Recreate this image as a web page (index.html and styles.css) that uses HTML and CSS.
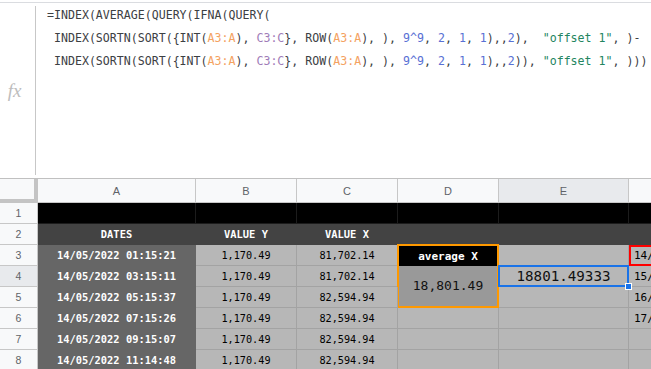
FILE: index.html
```html
<html>

<head>
    <link rel="stylesheet" href="styles.css">
</head>

<body>

    <div class="formula-bar">
        <div class="fx">fx</div>
        <pre class="formula">=INDEX(AVERAGE(QUERY(IFNA(QUERY(
 INDEX(SORTN(SORT({INT(<span class="r1">A3:A</span>), <span class="r2">C3:C</span>}, ROW(<span class="r1">A3:A</span>), ), <span class="num">9^9</span>, <span class="num">2</span>, <span class="num">1</span>, <span class="num">1</span>),,<span class="num">2</span>),  <span class="str">"offset 1"</span>, )-
 INDEX(SORTN(SORT({INT(<span class="r1">A3:A</span>), <span class="r2">C3:C</span>}, ROW(<span class="r1">A3:A</span>), ), <span class="num">9^9</span>, <span class="num">2</span>, <span class="num">1</span>, <span class="num">1</span>),,<span class="num">2</span>)), <span class="str">"offset 1"</span>, )))</pre>
    </div>

    <div class="sheet">
        <!-- column headers -->
        <div class="cell corner"></div>
        <div class="cell col-head">A</div>
        <div class="cell col-head">B</div>
        <div class="cell col-head">C</div>
        <div class="cell col-head">D</div>
        <div class="cell col-head selected">E</div>
        <div class="cell col-head">F</div>

        <!-- row 1 -->
        <div class="cell row-head">1</div>
        <div class="cell black"></div>
        <div class="cell black"></div>
        <div class="cell black"></div>
        <div class="cell black"></div>
        <div class="cell black"></div>
        <div class="cell black"></div>

        <!-- row 2 -->
        <div class="cell row-head">2</div>
        <div class="cell title">DATES</div>
        <div class="cell title">VALUE Y</div>
        <div class="cell title">VALUE X</div>
        <div class="cell title"></div>
        <div class="cell title"></div>
        <div class="cell title"></div>

        <!-- row 3 -->
        <div class="cell row-head">3</div>
        <div class="cell date">14/05/2022 01:15:21</div>
        <div class="cell val">1,170.49</div>
        <div class="cell val">81,702.14</div>
        <div class="cell avg-label">average X</div>
        <div class="cell val"></div>
        <div class="cell side red-box">14/05/2022</div>

        <!-- row 4 -->
        <div class="cell row-head selected">4</div>
        <div class="cell date">14/05/2022 03:15:11</div>
        <div class="cell val">1,170.49</div>
        <div class="cell val">81,702.14</div>
        <div class="cell avg-value">18,801.49</div>
        <div class="cell val result">18801.49333<span class="handle"></span></div>
        <div class="cell side">15/05/2022</div>

        <!-- row 5 -->
        <div class="cell row-head">5</div>
        <div class="cell date">14/05/2022 05:15:37</div>
        <div class="cell val">1,170.49</div>
        <div class="cell val">82,594.94</div>
        <div class="cell val"></div>
        <div class="cell side">16/05/2022</div>

        <!-- row 6 -->
        <div class="cell row-head">6</div>
        <div class="cell date">14/05/2022 07:15:26</div>
        <div class="cell val">1,170.49</div>
        <div class="cell val">82,594.94</div>
        <div class="cell val"></div>
        <div class="cell val"></div>
        <div class="cell side">17/05/2022</div>

        <!-- row 7 -->
        <div class="cell row-head">7</div>
        <div class="cell date">14/05/2022 09:15:07</div>
        <div class="cell val">1,170.49</div>
        <div class="cell val">82,594.94</div>
        <div class="cell val"></div>
        <div class="cell val"></div>
        <div class="cell side"></div>

        <!-- row 8 -->
        <div class="cell row-head">8</div>
        <div class="cell date">14/05/2022 11:14:48</div>
        <div class="cell val">1,170.49</div>
        <div class="cell val">82,594.94</div>
        <div class="cell val"></div>
        <div class="cell val"></div>
        <div class="cell side"></div>
    </div>

</body>

</html>
```

FILE: styles.css
```css
body {
    margin: 0;
    background-color: #fff;
    font-family: "Liberation Sans", Arial, sans-serif;
    width: 651px;
    height: 369px;
    overflow: hidden;
}

/* formula bar */

.formula-bar {
    display: flex;
    height: 175px;
    margin-top: 2px;
    border-top: 1px solid #dadce0;
    border-bottom: 1px solid #c0c0c0;
    overflow: hidden;
}

.fx {
    flex: 0 0 36px;
    margin: 3px 0 3px 0;
    border-right: 1px solid #c7c7c7;
    display: flex;
    align-items: center;
    justify-content: center;
    padding-right: 6px;
    box-sizing: border-box;
    font-family: "Liberation Serif", serif;
    font-style: italic;
    font-size: 19px;
    color: #bdbdbd;
}

.formula {
    margin: 0;
    padding: 1px 0 0 11px;
    font-family: "DejaVu Sans Mono", monospace;
    font-size: 11.6px;
    line-height: 23px;
    color: #3c4043;
    white-space: pre;
}

.r1 {
    color: #f4a261;
}

.r2 {
    color: #a07cb8;
}

.num {
    color: #5870d4;
}

.str {
    color: #23855f;
}

/* grid */

.sheet {
    display: grid;
    grid-template-columns: 38px 158px 101px 101px 101px 130px 100px;
    grid-template-rows: 24px repeat(8, 21px);
    overflow: hidden;
}

.cell {
    box-sizing: border-box;
    border-right: 1px solid #a3a3a3;
    border-bottom: 1px solid #a3a3a3;
    display: flex;
    align-items: center;
    justify-content: center;
    font-family: "DejaVu Sans Mono", monospace;
    font-size: 10.2px;
    white-space: nowrap;
    overflow: hidden;
}

.corner {
    background-color: #f8f9fa;
    border-right: 4px solid #c4c4c4;
    border-bottom: 4px solid #c4c4c4;
}

.col-head {
    background-color: #f8f9fa;
    border-color: #c7c7c7;
    font-family: "Liberation Sans", Arial, sans-serif;
    font-size: 11px;
    color: #5f6368;
}

.row-head {
    background-color: #f8f9fa;
    border-color: #c7c7c7;
    font-family: "Liberation Sans", Arial, sans-serif;
    font-size: 10.5px;
    color: #5f6368;
}

.selected {
    background-color: #e8eaed;
}

.black {
    background-color: #000;
    border-color: #1c1c1c;
}

.title {
    background-color: #434343;
    border-color: #434343;
    color: #fff;
    font-weight: bold;
    font-size: 10.4px;
}

.date {
    background-color: #666;
    border-color: #666;
    color: #fff;
    font-weight: bold;
    font-size: 10.4px;
}

.val {
    background-color: #b7b7b7;
    color: #000;
}

.side {
    background-color: #b7b7b7;
    justify-content: flex-start;
    padding-left: 5px;
    font-size: 11px;
    color: #000;
}

.red-box {
    border: 2px solid #ff0000;
    padding-left: 3px;
}

.avg-label {
    background-color: #000;
    color: #fff;
    font-weight: bold;
    font-size: 11px;
    border: 2px solid #ff9900;
    border-bottom: none;
    margin-left: -1px;
    margin-top: -1px;
}

.avg-value {
    grid-row: span 2;
    background-color: #999;
    color: #111;
    font-size: 13px;
    border: 2px solid #ff9900;
    border-top: none;
    margin-left: -1px;
    padding-bottom: 2px;
}

.result {
    position: relative;
    overflow: visible;
    font-size: 14.2px;
    color: #111;
}

.result::after {
    content: "";
    position: absolute;
    left: -1px;
    top: -1px;
    right: -1px;
    bottom: -1px;
    border: 2px solid #1a73e8;
}

.handle {
    position: absolute;
    right: -4px;
    bottom: -4px;
    width: 5px;
    height: 5px;
    background-color: #1a73e8;
    border: 1px solid #fff;
    z-index: 1;
}
```
